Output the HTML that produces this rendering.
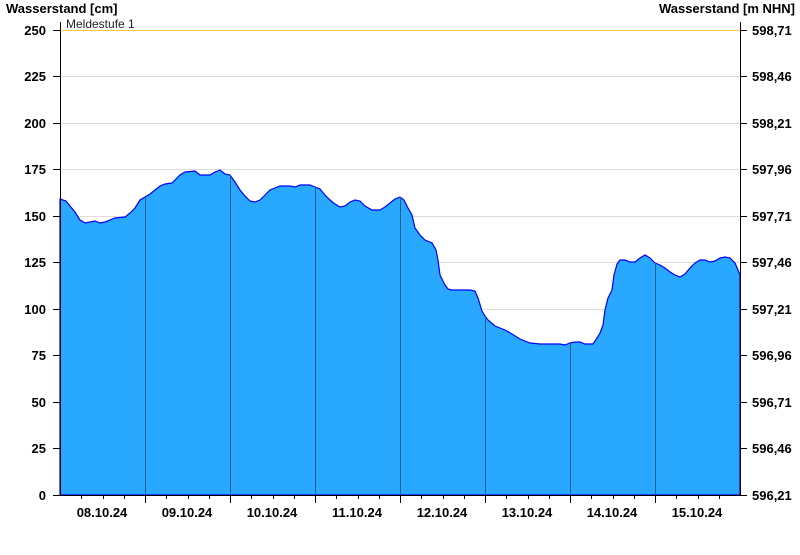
<!DOCTYPE html>
<html><head><meta charset="utf-8"><style>
body{margin:0;background:#fff;width:800px;height:550px;overflow:hidden}
svg text{font-family:"Liberation Sans",Arial,sans-serif}
</style></head><body>
<svg width="800" height="550" xmlns="http://www.w3.org/2000/svg">
<g stroke="#dcdcdc" stroke-width="1">
<line x1="60" y1="76.5" x2="740" y2="76.5"/><line x1="60" y1="123.5" x2="740" y2="123.5"/>
<line x1="60" y1="169.5" x2="740" y2="169.5"/><line x1="60" y1="216.5" x2="740" y2="216.5"/>
<line x1="60" y1="262.5" x2="740" y2="262.5"/><line x1="60" y1="309.5" x2="740" y2="309.5"/>
<line x1="60" y1="355.5" x2="740" y2="355.5"/><line x1="60" y1="402.5" x2="740" y2="402.5"/>
<line x1="60" y1="448.5" x2="740" y2="448.5"/>
</g>
<line x1="60" y1="30.5" x2="740" y2="30.5" stroke="#ffcc33" stroke-width="1"/>
<polygon fill="#29a8ff" stroke="#0000ff" stroke-width="1.2" points="60,495 60,199 66,201 70,206 75,212 80,220 85,223 95,221 100,223 105,222 115,218 125,217 130,213 135,208 140,200 145,197 150,194 155,190 160,186 165,184 172,183 175,180 180,175 185,172 195,171 200,175 210,175 215,172 220,170 225,174 230,175 235,182 240,190 245,196 250,201 255,202 260,200 265,195 270,190 275,188 280,186 290,186 295,187 300,185 310,185 315,187 320,189 325,195 330,200 335,204 340,207 345,206 350,202 355,200 360,201 365,206 372,210 380,210 385,207 390,203 395,199 400,197 404,200 408,208 412,215 415,228 420,235 425,240 432,243 436,250 438,260 440,275 445,285 448,289 452,290 470,290 475,291 478,298 482,311 485,316 488,320 495,326 505,330 512,334 520,339 530,343 540,344 560,344 565,345 570,343 575,342 580,342 585,344 593,344 597,338 600,333 603,325 605,310 608,298 612,290 614,275 617,264 620,260 625,260 630,262 635,262 640,258 645,255 650,258 655,263 660,265 665,268 670,272 675,275 680,277 685,274 690,268 695,263 700,260 705,260 710,262 715,261 720,258 725,257 730,258 735,263 738,270 740,275 740,495"/>
<g stroke="#1f5f8f" stroke-width="1">
<line x1="145.5" y1="197" x2="145.5" y2="495"/><line x1="230.5" y1="175" x2="230.5" y2="495"/>
<line x1="315.5" y1="187" x2="315.5" y2="495"/><line x1="400.5" y1="197" x2="400.5" y2="495"/>
<line x1="485.5" y1="316" x2="485.5" y2="495"/><line x1="570.5" y1="343" x2="570.5" y2="495"/>
<line x1="655.5" y1="263" x2="655.5" y2="495"/>
</g>
<g stroke="#000" stroke-width="1">
<line x1="60.5" y1="22" x2="60.5" y2="495"/><line x1="740.5" y1="22" x2="740.5" y2="495"/>
<line x1="60" y1="495.5" x2="741" y2="495.5"/>
<path d="M53 30.5H60M53 76.5H60M53 123.5H60M53 169.5H60M53 216.5H60M53 262.5H60M53 309.5H60M53 355.5H60M53 402.5H60M53 448.5H60M53 495.5H60"/>
<path d="M740 30.5H747M740 76.5H747M740 123.5H747M740 169.5H747M740 216.5H747M740 262.5H747M740 309.5H747M740 355.5H747M740 402.5H747M740 448.5H747M740 495.5H747"/>
<path d="M145.5 495V503M230.5 495V503M315.5 495V503M400.5 495V503M485.5 495V503M570.5 495V503M655.5 495V503"/>
<path d="M81.5 495V499M103.5 495V499M124.5 495V499M166.5 495V499M188.5 495V499M209.5 495V499M251.5 495V499M273.5 495V499M294.5 495V499M336.5 495V499M358.5 495V499M379.5 495V499M421.5 495V499M443.5 495V499M464.5 495V499M506.5 495V499M528.5 495V499M549.5 495V499M591.5 495V499M613.5 495V499M634.5 495V499M676.5 495V499M698.5 495V499M719.5 495V499"/>
</g>
<g font-size="13" font-weight="bold" fill="#000">
<text x="6" y="13">Wasserstand [cm]</text>
<text x="795" y="13" text-anchor="end">Wasserstand [m NHN]</text>
<g text-anchor="end">
<text x="46" y="35">250</text><text x="46" y="81">225</text><text x="46" y="128">200</text>
<text x="46" y="174">175</text><text x="46" y="221">150</text><text x="46" y="267">125</text>
<text x="46" y="314">100</text><text x="46" y="360">75</text><text x="46" y="407">50</text>
<text x="46" y="453">25</text><text x="46" y="500">0</text>
</g>
<g>
<text x="752" y="35">598,71</text><text x="752" y="81">598,46</text><text x="752" y="128">598,21</text>
<text x="752" y="174">597,96</text><text x="752" y="221">597,71</text><text x="752" y="267">597,46</text>
<text x="752" y="314">597,21</text><text x="752" y="360">596,96</text><text x="752" y="407">596,71</text>
<text x="752" y="453">596,46</text><text x="752" y="500">596,21</text>
</g>
<g text-anchor="middle">
<text x="102" y="517">08.10.24</text><text x="187" y="517">09.10.24</text><text x="272" y="517">10.10.24</text>
<text x="357" y="517">11.10.24</text><text x="442" y="517">12.10.24</text><text x="527" y="517">13.10.24</text>
<text x="612" y="517">14.10.24</text><text x="697" y="517">15.10.24</text>
</g>
</g>
<text x="66" y="28" font-size="12" fill="#222">Meldestufe 1</text>
</svg>
</body></html>
